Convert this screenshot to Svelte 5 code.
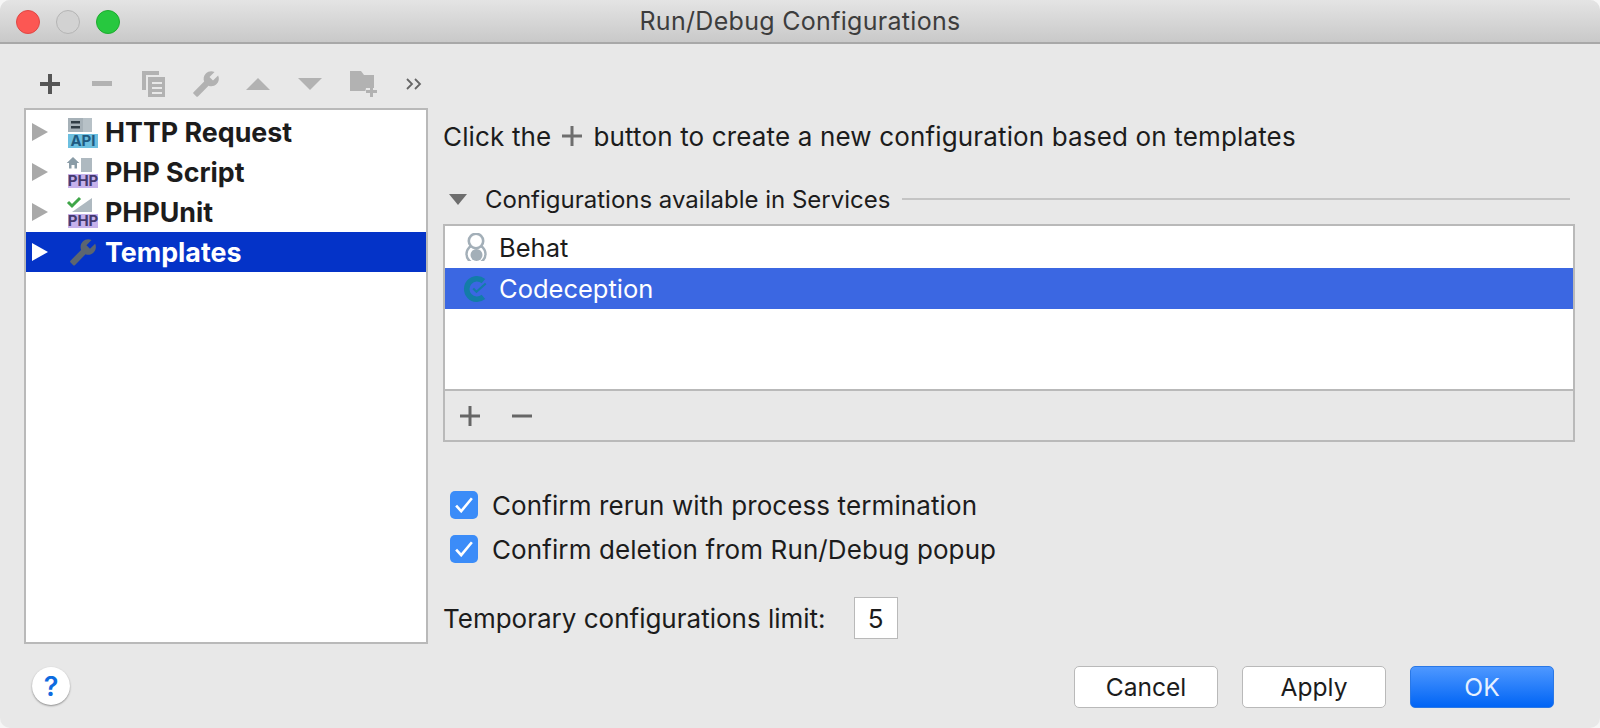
<script>
  const wrench = "M22.7 19l-9.1-9.1c.9-2.3.4-5-1.5-6.9-2-2-5-2.4-7.4-1.3L9 6 6 9 1.6 4.7C.4 7.1.9 10.1 2.9 12.1c1.9 1.9 4.6 2.4 6.9 1.5l9.1 9.1c.4.4 1 .4 1.4 0l2.3-2.3c.5-.4.5-1.1.1-1.4z";
  const rows = [
    { name: 'HTTP Request', icon: 'api' },
    { name: 'PHP Script', icon: 'script' },
    { name: 'PHPUnit', icon: 'unit' },
    { name: 'Templates', icon: 'tpl', selected: true }
  ];
</script>

<div class="window">
  <header class="titlebar">
    <div class="lights">
      <span class="light red"></span>
      <span class="light gray"></span>
      <span class="light green"></span>
    </div>
    <div class="title">Run/Debug Configurations</div>
  </header>

  <div class="main">
    <div class="left">
      <div class="toolbar">
        <span class="tool"><svg width="20" height="20" viewBox="0 0 20 20"><path d="M8 0h4v8h8v4h-8v8H8v-8H0V8h8z" fill="#555"/></svg></span>
        <span class="tool"><svg width="20" height="6" viewBox="0 0 20 6"><rect y="0" width="20" height="5" fill="#b2b2b2"/></svg></span>
        <span class="tool"><svg width="26" height="28" viewBox="0 0 26 28"><path d="M1 1h17v4H5v15H1z" fill="#b2b2b2"/><path d="M7 7h17v20H7z" fill="#b2b2b2"/><path d="M11 12h10v2H11zM11 17h10v2H11zM11 22h10v2H11z" fill="#e8e8e8"/></svg></span>
        <span class="tool"><svg width="28" height="28" viewBox="0 0 24 24"><path transform="translate(24 0) scale(-1 1)" d={wrench} fill="#b2b2b2"/></svg></span>
        <span class="tool"><svg width="24" height="12" viewBox="0 0 24 12"><path d="M12 0l12 12H0z" fill="#b2b2b2"/></svg></span>
        <span class="tool"><svg width="24" height="12" viewBox="0 0 24 12"><path d="M0 0h24L12 12z" fill="#b2b2b2"/></svg></span>
        <span class="tool"><svg width="30" height="26" viewBox="-2 0 30 26"><path d="M1 0h11l3 4h10v16H1z" fill="#b2b2b2"/><path d="M17 17h12v5h-4v4h-5v-4h-4z" fill="#e8e8e8"/><path d="M21 15h3v4h4v3h-4v4h-3v-4h-4v-3h4z" fill="#b2b2b2"/></svg></span>
        <span class="tool"><svg width="16" height="12" viewBox="0 0 16 12"><path d="M1 1l5 5-5 5M9 1l5 5-5 5" fill="none" stroke="#666" stroke-width="1.8"/></svg></span>
      </div>

      <div class="tree">
        {#each rows as row}
          <div class="tree-row" class:selected={row.selected}>
            <svg class="arrow" width="16" height="18" viewBox="0 0 16 18"><path d="M0 0l16 9L0 18z"/></svg>
            <span class="tree-icon">
              {#if row.icon === 'api'}
                <svg width="34" height="36" viewBox="0 -2 34 36">
                  <rect x="2" y="2" width="15" height="14" fill="#a6b1b8"/>
                  <rect x="17" y="2" width="9" height="14" fill="#b7c1c7"/>
                  <rect x="5" y="5" width="9" height="2.5" fill="#2f3b44"/>
                  <rect x="5" y="10" width="9" height="2.5" fill="#2f3b44"/>
                  <rect x="2" y="18" width="30" height="14" fill="#6cbfe0"/>
                  <text x="17" y="30" class="badge" fill="#1f5a80">API</text>
                </svg>
              {:else if row.icon === 'script'}
                <svg width="34" height="36" viewBox="0 -2 34 36">
                  <rect x="15" y="2" width="11" height="14" fill="#aeb9c0"/>
                  <path d="M7 1l6.300 6H11v5.500H8.500V9h-3v3.500H3V7H.7z" fill="#8a9ca7"/>
                  <rect x="2" y="18" width="30" height="14" fill="#c6b2ec"/>
                  <text x="17" y="30" class="badge" fill="#443a70">PHP</text>
                </svg>
              {:else if row.icon === 'unit'}
                <svg width="34" height="36" viewBox="0 -2 34 36">
                  <path d="M6 16L26 2v14z" fill="#aeb9c0"/>
                  <path d="M2 6l4 4 8-8" fill="none" stroke="#3fa648" stroke-width="3"/>
                  <rect x="2" y="18" width="30" height="14" fill="#c6b2ec"/>
                  <text x="17" y="30" class="badge" fill="#443a70">PHP</text>
                </svg>
              {:else}
                <svg width="34" height="36" viewBox="0 -2 34 36">
                  <path transform="translate(31 2) scale(-1.17 1.2)" d={wrench} fill="#5c6670"/>
                </svg>
              {/if}
            </span>
            <span class="tree-label">{row.name}</span>
          </div>
        {/each}
      </div>
    </div>

    <div class="right">
      <p class="hint">
        Click the
        <svg width="20" height="20" viewBox="0 0 20 20"><path d="M8.500 0h3v8.500H20v3h-8.500V20h-3v-8.500H0v-3h8.500z" fill="#6e6e6e"/></svg>
        button to create a new configuration based on templates
      </p>

      <div class="group">
        <svg width="18" height="11" viewBox="0 0 18 11"><path d="M0 0h18L9 11z" fill="#6e6e6e"/></svg>
        <span class="group-title">Configurations available in Services</span>
        <span class="group-line"></span>
      </div>

      <div class="services">
        <div class="service-list">
          <div class="service-row first">
            <svg width="26" height="28" viewBox="0 0 26 28">
              <circle cx="13" cy="21" r="9.500" fill="#fff" stroke="#a3afb8" stroke-width="2.400"/>
              <circle cx="13" cy="8" r="7.200" fill="#fff" stroke="#a3afb8" stroke-width="2.600"/>
              <circle cx="13.500" cy="22" r="6" fill="#a3afb8"/>
            </svg>
            <span>Behat</span>
          </div>
          <div class="service-row active">
            <svg width="26" height="28" viewBox="0 0 28 28">
              <path d="M22 5.500A11 11 0 1 0 22 22.500" fill="none" stroke="#137ca8" stroke-width="6"/>
              <path d="M11 13.500l3.500 3.500 10-9" fill="none" stroke="#137ca8" stroke-width="2.200"/>
            </svg>
            <span>Codeception</span>
          </div>
        </div>
        <div class="service-tools">
          <svg width="20" height="20" viewBox="0 0 20 20"><path d="M8.500 0h3v8.500H20v3h-8.500V20h-3v-8.500H0v-3h8.500z" fill="#666"/></svg>
          <svg width="20" height="20" viewBox="0 0 20 20"><rect y="8.500" width="20" height="3" fill="#666"/></svg>
        </div>
      </div>

      <label class="check first">
        <span class="box"><svg width="18" height="16" viewBox="0 0 16 14"><path d="M1 7.500l4.500 5L15 1" fill="none" stroke="#fff" stroke-width="2.300"/></svg></span>
        Confirm rerun with process termination
      </label>
      <label class="check">
        <span class="box"><svg width="18" height="16" viewBox="0 0 16 14"><path d="M1 7.500l4.500 5L15 1" fill="none" stroke="#fff" stroke-width="2.300"/></svg></span>
        Confirm deletion from Run/Debug popup
      </label>

      <div class="limit">
        <span>Temporary configurations limit:</span>
        <span class="limit-field">5</span>
      </div>
    </div>
  </div>

  <footer class="footer">
    <span class="help">?</span>
    <div class="buttons">
      <button class="btn">Cancel</button>
      <button class="btn">Apply</button>
      <button class="btn primary">OK</button>
    </div>
  </footer>
</div>

<style>
  :global(body) {
    margin: 0;
    background: #f6f6f6;
  }

  .window {
    width: 1600px;
    height: 728px;
    box-sizing: border-box;
    background: #e8e8e8;
    border-radius: 10px;
    overflow: hidden;
    display: flex;
    flex-direction: column;
    font-family: Inter, "Liberation Sans", sans-serif;
    font-size: 26px;
    color: #1c1c1c;
  }

  .titlebar {
    height: 44px;
    box-sizing: border-box;
    flex-shrink: 0;
    position: relative;
    display: flex;
    align-items: center;
    justify-content: center;
    background: linear-gradient(#e4e4e4, #c9c9c9);
    border-bottom: 2px solid #a8a8a8;
  }

  .lights {
    position: absolute;
    left: 16px;
    top: 10px;
    display: flex;
    gap: 16px;
  }

  .light {
    width: 24px;
    height: 24px;
    box-sizing: border-box;
    border-radius: 50%;
    border: 1px solid transparent;
  }

  .red { background: #fc5753; border-color: #df4744; }
  .gray { background: #d2d2d2; border-color: #b4b4b4; }
  .green { background: #27c83f; border-color: #1eab2f; }

  .title {
    font-size: 25px;
    letter-spacing: 0.3px;
    color: #3d3d3d;
  }

  .main {
    display: flex;
    height: 600px;
    flex-shrink: 0;
  }

  .left {
    margin-left: 24px;
    width: 404px;
    flex-shrink: 0;
  }

  .toolbar {
    display: flex;
    height: 64px;
    align-items: center;
    padding-top: 16px;
    box-sizing: border-box;
  }

  .tool {
    width: 52px;
    flex-shrink: 0;
    display: flex;
    justify-content: center;
    align-items: center;
  }

  .tree {
    height: 536px;
    box-sizing: border-box;
    background: #fff;
    border: 2px solid #b9b9b9;
    padding-top: 2px;
  }

  .tree-row {
    height: 40px;
    display: flex;
    align-items: center;
    font-weight: 700;
    font-size: 26.800px;
    color: #1c1c1c;
    padding-left: 6px;
  }

  .tree-row.selected {
    background: #0433c8;
    color: #fff;
  }

  .arrow {
    fill: #a9a9a9;
    flex-shrink: 0;
  }

  .selected .arrow {
    fill: #fff;
  }

  .tree-icon {
    margin-left: 18px;
    margin-right: 5px;
    width: 34px;
    height: 36px;
    display: flex;
  }

  .badge {
    font-size: 15px;
    font-weight: 700;
    text-anchor: middle;
  }

  .right {
    margin-left: 15px;
    width: 1132px;
    flex-shrink: 0;
  }

  .hint {
    margin: 72px 0 0;
    height: 40px;
    display: flex;
    align-items: center;
    gap: 11px;
    letter-spacing: 0.15px;
  }

  .group {
    margin-top: 28px;
    height: 30px;
    display: flex;
    align-items: center;
    padding-left: 6px;
    padding-right: 5px;
    font-size: 24px;
    box-sizing: border-box;
  }

  .group-title {
    margin-left: 18px;
  }

  .group-line {
    flex: 1;
    height: 2px;
    background: #c4c4c4;
    margin-left: 12px;
  }

  .services {
    margin-top: 10px;
    height: 218px;
    box-sizing: border-box;
    border: 2px solid #b9b9b9;
    display: flex;
    flex-direction: column;
  }

  .service-list {
    height: 165px;
    background: #fff;
    border-bottom: 2px solid #b9b9b9;
    box-sizing: border-box;
  }

  .service-row {
    height: 41px;
    display: flex;
    align-items: center;
    padding-left: 18px;
    gap: 10px;
    font-size: 25.500px;
  }

  .service-row.first {
    height: 42px;
  }

  .service-row svg {
    flex-shrink: 0;
  }

  .service-row.active {
    background: #3b67e2;
    color: #fff;
  }

  .service-tools {
    flex: 1;
    display: flex;
    align-items: center;
    padding-left: 15px;
    gap: 32px;
  }

  .check {
    display: flex;
    align-items: center;
    height: 28px;
    margin-top: 16px;
    margin-left: 7px;
    gap: 14px;
    letter-spacing: 0.1px;
  }

  .check.first {
    margin-top: 49px;
  }

  .box {
    width: 28px;
    height: 28px;
    border-radius: 5px;
    background: #3b8cf8;
    display: flex;
    align-items: center;
    justify-content: center;
  }

  .limit {
    margin-top: 34px;
    height: 42px;
    display: flex;
    align-items: center;
    gap: 28px;
  }

  .limit-field {
    width: 44px;
    height: 42px;
    box-sizing: border-box;
    background: #fff;
    border: 1px solid #b9b9b9;
    display: flex;
    align-items: center;
    justify-content: center;
  }

  .footer {
    flex: 1;
    display: flex;
    justify-content: space-between;
    align-items: flex-start;
    padding: 22px 46px 0 32px;
  }

  .help {
    width: 38px;
    height: 38px;
    margin-top: 1px;
    border-radius: 50%;
    background: #fff;
    box-shadow: 0 1px 2px rgba(0, 0, 0, 0.4);
    color: #0e6be0;
    font-weight: 600;
    font-size: 27px;
    display: flex;
    align-items: center;
    justify-content: center;
  }

  .buttons {
    display: flex;
    gap: 24px;
  }

  .btn {
    width: 144px;
    height: 42px;
    border-radius: 5px;
    border: 1px solid #b9b9b9;
    background: #fff;
    color: #1c1c1c;
    font: inherit;
    font-size: 24.600px;
    padding: 0;
  }

  .btn.primary {
    background: linear-gradient(#4e98ff, #0064f5);
    border-color: #2a78e6;
    color: #e6f0ff;
  }
</style>
